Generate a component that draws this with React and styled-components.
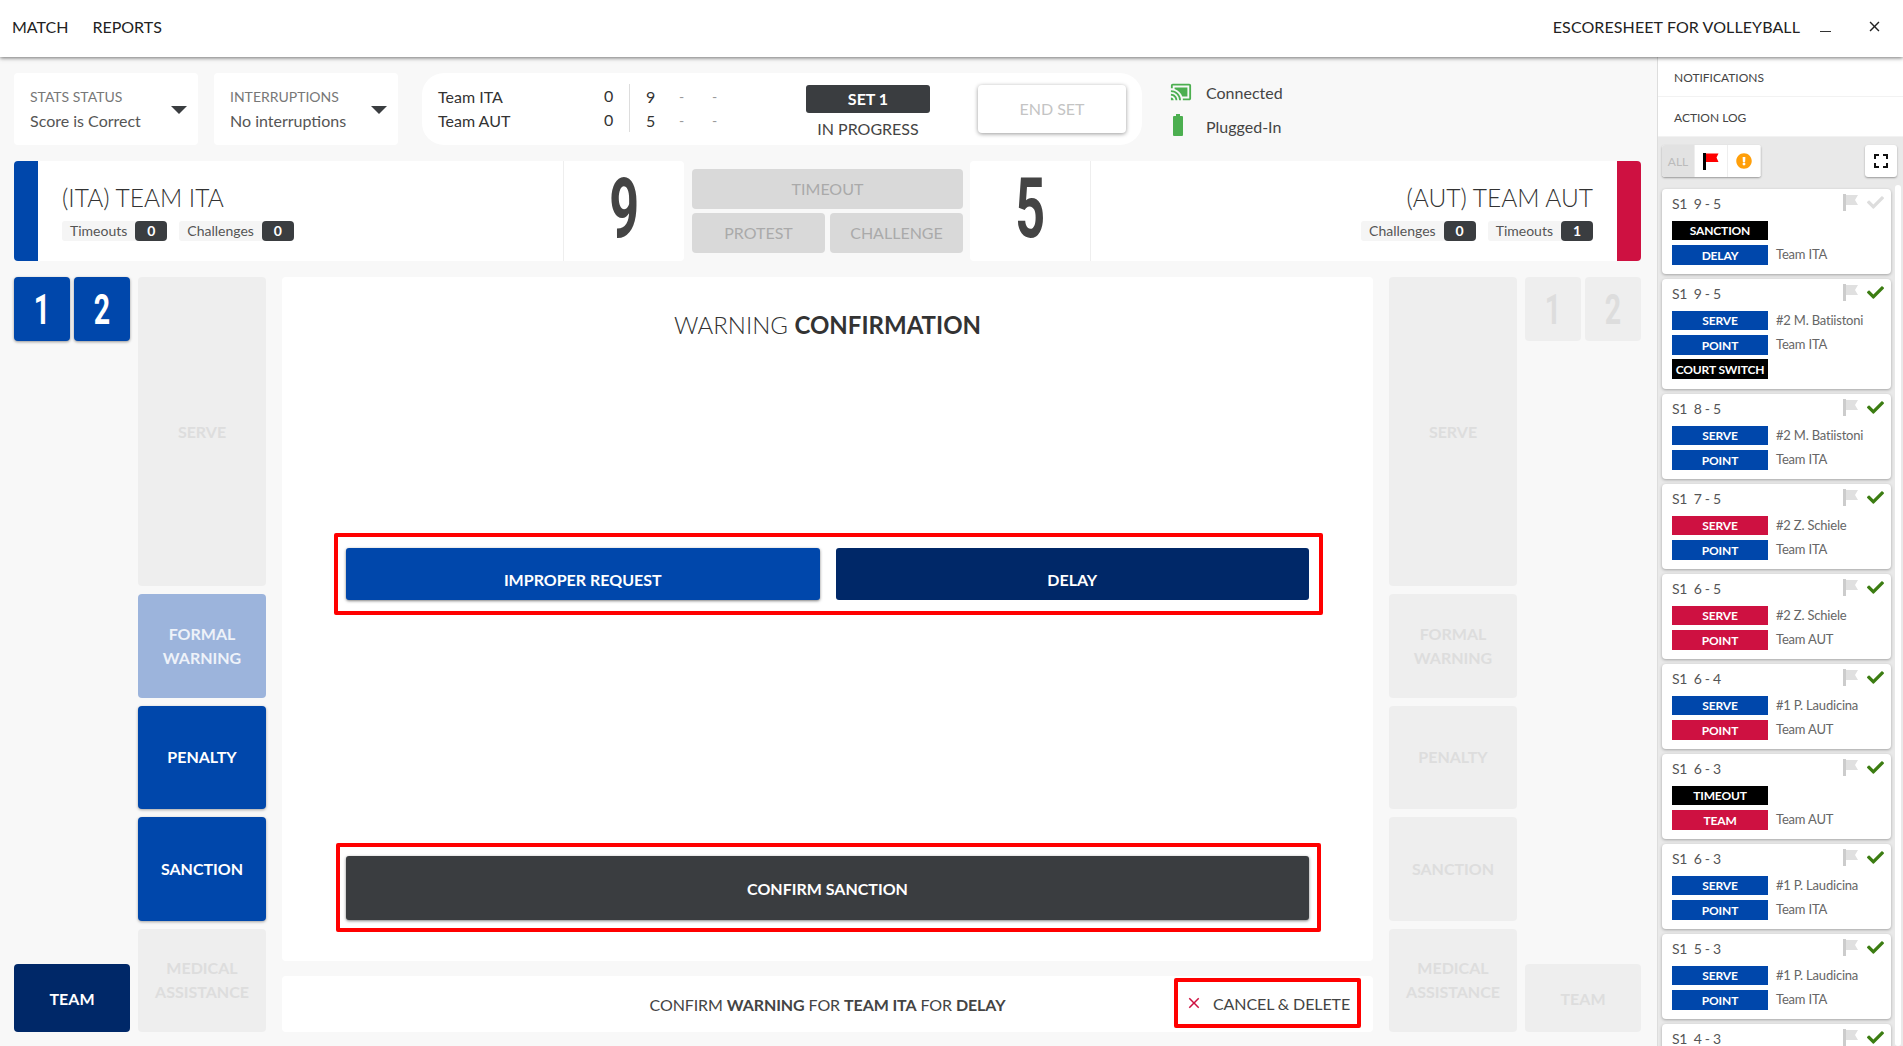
import React from 'react';
import styled, { createGlobalStyle } from 'styled-components';
import { FaCheck, FaExclamationCircle } from 'react-icons/fa';
import { MdCastConnected, MdFullscreen, MdClose } from 'react-icons/md';

const BLUE = '#0047ab';
const NAVY = '#002868';
const DARK = '#3a3d40';
const RED = '#ce1141';

const Global = createGlobalStyle`
  html, body { margin: 0; padding: 0; height: 100%; overflow: hidden; background: #f8f8f8; }
  * { box-sizing: border-box; }
  body { font-family: Lato, "Open Sans", sans-serif; color: #3a3d40; }
`;

const Page = styled.div`width: 1903px; height: 1046px; display: flex; flex-direction: column; overflow: hidden;`;
const Header = styled.header`
  height: 57px; flex: none; background: #fff; display: flex; align-items: center;
  padding: 0 20px 4px 12px; box-shadow: 0 1px 4px rgba(0,0,0,.55); position: relative; z-index: 3;
  font-size: 16px; color: #222;
`;
const Nav = styled.span`margin-right: 24px;`;
const HeaderTitle = styled.span`margin-left: auto; margin-right: 20px; letter-spacing: .1px;`;
const Minimise = styled.span`width: 11px; height: 1px; background: #333; margin: 10px 35px 0 0;`;
const Body = styled.div`flex: 1; display: flex; min-height: 0;`;
const Main = styled.main`width: 1657px; flex: none; padding: 16px 16px 0 14px; display: flex; flex-direction: column;`;

const TopRow = styled.div`display: flex; height: 72px; flex: none;`;
const Drop = styled.div`
  width: 184px; background: #fff; border-radius: 4px; margin-right: 16px; padding: 14px 16px;
  position: relative;
`;
const DropLabel = styled.div`font-size: 14px; color: #777; line-height: 20px;`;
const DropValue = styled.div`font-size: 16px; color: #555; line-height: 24px; margin-top: 2px;`;
const Caret = styled.span`
  position: absolute; right: 11px; top: 33px; width: 0; height: 0;
  border-left: 8px solid transparent; border-right: 8px solid transparent; border-top: 8px solid #3a3d40;
`;
const ScoreCard = styled.div`
  width: 720px; margin-left: 8px; background: #fff; border-radius: 22px; display: flex; align-items: center;
  padding: 0 16px;
`;
const ScoreGrid = styled.div`
  width: 300px; margin-top: -2px; display: grid; grid-template-columns: 172px 36px 33px 33px 20px; grid-auto-rows: 24px;
  font-size: 16px; color: #333; align-items: center;
`;
const ScoreNum = styled.span`position: relative;`;
const Dash = styled.span`color: #999; font-size: 14px;`;
const Zero = styled.span`
  margin-left: -6px; height: 24px; line-height: 24px; border-right: 1px solid #ddd;
  width: 26px;
`;
const SetBox = styled.div`width: 124px; margin: 4px 0 0 68px; display: flex; flex-direction: column; align-items: center;`;
const SetPill = styled.div`
  width: 124px; height: 28px; background: ${DARK}; color: #fff; border-radius: 3px; font-weight: 700;
  font-size: 16px; display: flex; align-items: center; justify-content: center;
`;
const SetState = styled.div`font-size: 16px; color: #444; margin-top: 7px; line-height: 18px;`;
const EndSet = styled.div`
  width: 148px; height: 48px; margin-left: 48px; background: #fff; border-radius: 4px; color: #c4c4c4; font-size: 16px;
  box-shadow: 0 1px 4px rgba(0,0,0,.4); display: flex; align-items: center; justify-content: center; padding-bottom: 1px;
`;
const Status = styled.div`margin-left: 28px; padding-top: 2px; display: grid; grid-template-columns: 36px auto; grid-auto-rows: 34px; align-items: center; font-size: 16px; color: #444;`;
const Battery = styled.span`
  display: block; width: 10px; height: 20px; background: #4caf50; border-radius: 1px; position: relative; margin-left: 3px;
  &::before { content: ''; position: absolute; top: -2px; left: 3px; width: 4px; height: 2px; background: #4caf50; }
`;

const TeamRow = styled.div`display: flex; height: 100px; margin-top: 16px; flex: none;`;
const TeamCard = styled.div`
  width: ${p => p.$right ? 671 : 670}px; flex: none; background: #fff; border-radius: 4px; display: flex; overflow: hidden;
  flex-direction: ${p => p.$right ? 'row-reverse' : 'row'};
`;
const TeamBar = styled.div`width: 24px; flex: none; background: ${p => p.$c};`;
const TeamInfo = styled.div`
  flex: 1; padding: ${p => p.$right ? '0 24px 0 0' : '0 0 0 24px'};
  display: flex; flex-direction: column; align-items: ${p => p.$right ? 'flex-end' : 'flex-start'};
`;
const TeamName = styled.div`font-size: 24.500px; font-weight: 300; line-height: 32px; margin-top: 21px; color: #333;`;
const Badges = styled.div`display: flex; gap: 12px; margin-top: 7px;`;
const Badge = styled.div`display: flex; height: 20px; background: #f5f5f5; border-radius: 3px; font-size: 14px; color: #555; line-height: 20px; padding-left: 8px;`;
const BadgeNum = styled.span`
  width: 32px; margin-left: 8px; background: ${DARK}; color: #fff; border-radius: 4px; font-weight: 700; text-align: center; font-size: 14px;
`;
const ScoreBox = styled.div`
  width: 121px; flex: none; display: flex; align-items: center; justify-content: center;
  ${p => p.$right ? 'border-right' : 'border-left'}: 1px solid #eee;
`;
const BigDigit = styled.span`
  display: inline-block; font-family: Roboto, sans-serif; font-weight: 700; font-size: 84px; line-height: 1; color: #444;
  transform: translateY(-2px) scale(.62, 1);
`;
const Actions = styled.div`
  width: 271px; margin: 8px 7px 8px 8px; flex: none; display: grid; grid-template-columns: 133px 133px; gap: 4px 5px; grid-template-rows: 40px 40px;
`;
const Disabled = styled.div`
  grid-column: ${p => p.$wide ? '1 / 3' : 'auto'};
  background: #d9d9d9; color: #aaa; border-radius: 4px; font-size: 16px; padding-bottom: 1px;
  display: flex; align-items: center; justify-content: center;
`;

const Play = styled.div`flex: 1; margin-top: 16px; display: flex; min-height: 0; padding-bottom: 14px;`;
const SideLeft = styled.div`width: 116px; flex: none; display: flex; flex-direction: column; margin-right: 8px;`;
const SetPair = styled.div`display: flex; gap: 4px;`;
const SetBtn = styled.div`
  width: 56px; height: 64px; border-radius: 4px; display: flex; align-items: center; justify-content: center; overflow: hidden;
  background: ${p => p.$on ? BLUE : '#eee'};
  color: ${p => p.$on ? '#fff' : '#ddd'};
  box-shadow: ${p => p.$on ? '0 1px 3px rgba(0,0,0,.4)' : 'none'};
`;
const SetDigit = styled.span`
  display: inline-block; font-family: Roboto, sans-serif; font-weight: 700; font-size: 42px; transform: scale(.68, 1);
`;
const TeamBtn = styled.div`
  height: 68px; margin-top: auto; border-radius: 4px; background: ${p => p.$on ? NAVY : '#eee'}; color: ${p => p.$on ? '#fff' : '#ddd'};
  font-weight: 700; font-size: 16px; display: flex; align-items: center; justify-content: center;
`;
const ActionCol = styled.div`width: 128px; flex: none; display: flex; flex-direction: column; gap: 8px;`;
const ActionBtn = styled.div`
  flex: ${p => p.$big ? '0 0 309px' : '0 0 103.500px'};
  border-radius: 4px; display: flex; align-items: center; justify-content: center; text-align: center; padding: 0 8px;
  font-weight: 700; font-size: 16px; line-height: 24px;
  background: ${p => p.$k === 'on' ? BLUE : p.$k === 'faded' ? '#9cb4dc' : '#eee'};
  color: ${p => p.$k === 'on' ? '#fff' : p.$k === 'faded' ? '#eef2f9' : '#ddd'};
  box-shadow: ${p => p.$k === 'on' ? '0 1px 3px rgba(0,0,0,.35)' : 'none'};
`;
const Center = styled.div`width: 1091px; margin: 0 16px; flex: none; display: flex; flex-direction: column;`;
const ConfirmCard = styled.div`
  height: 684px; background: #fff; border-radius: 4px; display: flex; flex-direction: column; align-items: center;
`;
const ConfirmTitle = styled.div`font-size: 24px; font-weight: 300; color: #333; line-height: 30px; margin-top: 33px;`;
const Strong = styled.b`font-weight: 700;`;
const Outline = styled.div`border: 4px solid #f00; border-radius: 2px;`;
const ChoiceBox = styled(Outline)`
  width: 989px; height: 82px; margin: 193px 0 0 2px; padding: 11px 10px 0 8px; display: flex; gap: 16px; align-items: flex-start;
`;
const Choice = styled.div`
  flex: 1; height: 52px; border-radius: 3px; background: ${p => p.$c}; color: #fff; font-weight: 700; font-size: 16px;
  display: flex; align-items: flex-end; justify-content: center; padding-bottom: 10px; line-height: 20px;
  box-shadow: ${p => p.$shadow ? '0 1px 3px rgba(0,0,0,.5)' : 'none'};
`;
const SubmitBox = styled(Outline)`width: 985px; height: 89px; margin: 228px 0 0 2px; padding: 9px 8px 0 6px;`;
const Submit = styled.div`
  height: 64px; border-radius: 3px; background: ${DARK}; color: #fff; font-weight: 700; font-size: 16px;
  display: flex; align-items: center; justify-content: center; box-shadow: 0 1px 3px rgba(0,0,0,.5);
`;
const Footer = styled.div`
  height: 56px; margin-top: 15px; background: #fff; border-radius: 4px; display: flex; align-items: center; position: relative;
  font-size: 16px; color: #444;
`;
const FooterText = styled.div`width: 100%; text-align: center; letter-spacing: -.1px;`;
const Cancel = styled(Outline)`
  position: absolute; right: 12px; top: 2px; width: 187px; height: 50px; display: flex; align-items: center; padding-left: 7px; gap: 10px;
  color: #444; font-size: 16px; white-space: nowrap; letter-spacing: -.1px;
`;
const SideRight = styled.div`width: 116px; flex: none; display: flex; flex-direction: column; margin-left: 8px;`;

const Aside = styled.aside`
  width: 246px; flex: none; background: #e9e9e9; border-left: 1px solid #ddd; display: flex; flex-direction: column; min-height: 0; overflow: hidden;
`;
const AsideTab = styled.div`
  height: 40px; flex: none; background: #fff; font-size: 12px; color: #444; display: flex; align-items: center; padding: 2px 0 0 16px;
  border-bottom: 1px solid #f2f2f2;
`;
const FilterRow = styled.div`display: flex; justify-content: space-between; padding: 8px 6px 0 4px; flex: none;`;
const FilterGroup = styled.div`display: flex; height: 32px; background: #fff; border-radius: 3px; box-shadow: 0 1px 2px rgba(0,0,0,.35); overflow: hidden;`;
const FilterCell = styled.div`
  width: 33px; display: flex; align-items: center; justify-content: center; font-size: 12px;
  background: ${p => p.$on ? '#e2e2e2' : '#fff'}; color: #bbb; border-right: 1px solid #eee;
`;
const FullBtn = styled.div`
  width: 32px; height: 32px; background: #fff; border-radius: 3px; box-shadow: 0 1px 2px rgba(0,0,0,.35);
  display: flex; align-items: center; justify-content: center; color: #111;
`;
const LogArea = styled.div`flex: 1; position: relative; padding: 12px 0 0 4px; min-height: 0; overflow: hidden;`;
const Scroll = styled.div`position: absolute; right: 2px; top: 8px; bottom: 0; width: 6px; background: #fff; border-radius: 3px;`;
const LogCard = styled.div`
  width: 229px; background: #fff; border-radius: 4px; padding: 0 10px; margin-bottom: 5px; position: relative;
  height: ${p => p.$tall ? 110 : 85}px; box-shadow: 0 1px 3px rgba(0,0,0,.3); flex: none;
`;
const LogHead = styled.div`height: 32px; padding-top: 5px; font-size: 14px; line-height: 20px; color: #555; white-space: pre; letter-spacing: -.3px;`;
const LogMarks = styled.div`position: absolute; right: 7px; top: 5px; display: flex; align-items: flex-start; gap: 8px;`;
const LogLine = styled.div`display: flex; align-items: center; margin-bottom: ${p => p.$first ? 5 : 4}px; font-size: 13px; color: #666; letter-spacing: -.2px;`;
const Tag = styled.span`
  width: 96px; height: ${p => p.$first ? 19 : 20}px; flex: none; margin-right: 8px; background: ${p => p.$c}; color: #fff; font-weight: 700; font-size: 12px;
  display: flex; align-items: center; justify-content: center; white-space: nowrap; letter-spacing: -.15px;
`;
const Player = styled.span`padding-bottom: 2px;`;

const FlagOutline = () => (
  <svg width="16" height="17" viewBox="0 0 16 17"><rect x="0" y="0" width="3" height="17" fill="#ccc" /><path d="M3 1h12l-3 5 3 5H3z" fill="#e0e0e0" /></svg>
);
const RedFlag = () => (
  <svg width="16" height="17" viewBox="0 0 16 17"><rect x="0" y="0" width="3" height="17" fill="#000" /><path d="M3 0.500h12.500l-2 4 2 4.500H3z" fill="#f00" /></svg>
);

const S = { B: BLUE, R: RED, K: '#000' };
const cards = [
  ['9 - 5', false, [['SANCTION', 'K', ''], ['DELAY', 'B', 'Team ITA']], true],
  ['9 - 5', true, [['SERVE', 'B', '#2 M. Batiistoni'], ['POINT', 'B', 'Team ITA'], ['COURT SWITCH', 'K', '']]],
  ['8 - 5', false, [['SERVE', 'B', '#2 M. Batiistoni'], ['POINT', 'B', 'Team ITA']]],
  ['7 - 5', false, [['SERVE', 'R', '#2 Z. Schiele'], ['POINT', 'B', 'Team ITA']]],
  ['6 - 5', false, [['SERVE', 'R', '#2 Z. Schiele'], ['POINT', 'R', 'Team AUT']]],
  ['6 - 4', false, [['SERVE', 'B', '#1 P. Laudicina'], ['POINT', 'R', 'Team AUT']]],
  ['6 - 3', false, [['TIMEOUT', 'K', ''], ['TEAM', 'R', 'Team AUT']]],
  ['6 - 3', false, [['SERVE', 'B', '#1 P. Laudicina'], ['POINT', 'B', 'Team ITA']]],
  ['5 - 3', false, [['SERVE', 'B', '#1 P. Laudicina'], ['POINT', 'B', 'Team ITA']]],
  ['4 - 3', false, []],
];

const Dropdown = ({ label, value }) => (
  <Drop><DropLabel>{label}</DropLabel><DropValue>{value}</DropValue><Caret /></Drop>
);

const ActionColumn = ({ on }) => (
  <ActionCol>
    <ActionBtn $big $k="off">SERVE</ActionBtn>
    <ActionBtn $k={on ? 'faded' : 'off'}>FORMAL<br />WARNING</ActionBtn>
    <ActionBtn $k={on ? 'on' : 'off'}>PENALTY</ActionBtn>
    <ActionBtn $k={on ? 'on' : 'off'}>SANCTION</ActionBtn>
    <ActionBtn $k="off">MEDICAL<br />ASSISTANCE</ActionBtn>
  </ActionCol>
);

const Sets = ({ on }) => (
  <SetPair>
    <SetBtn $on={on}><SetDigit>1</SetDigit></SetBtn>
    <SetBtn $on={on}><SetDigit>2</SetDigit></SetBtn>
  </SetPair>
);

export default function App() {
  return (
    <Page>
      <Global />
      <Header>
        <Nav>MATCH</Nav><Nav>REPORTS</Nav>
        <HeaderTitle>ESCORESHEET FOR VOLLEYBALL</HeaderTitle>
        <Minimise />
        <MdClose size={17} color="#222" />
      </Header>
      <Body>
        <Main>
          <TopRow>
            <Dropdown label="STATS STATUS" value="Score is Correct" />
            <Dropdown label="INTERRUPTIONS" value="No interruptions" />
            <ScoreCard>
              <ScoreGrid>
                <span>Team ITA</span><Zero>0</Zero><ScoreNum>9</ScoreNum><Dash>-</Dash><Dash>-</Dash>
                <span>Team AUT</span><Zero>0</Zero><ScoreNum>5</ScoreNum><Dash>-</Dash><Dash>-</Dash>
              </ScoreGrid>
              <SetBox><SetPill>SET 1</SetPill><SetState>IN PROGRESS</SetState></SetBox>
              <EndSet>END SET</EndSet>
            </ScoreCard>
            <Status>
              <MdCastConnected size={22} color="#4caf50" /><span>Connected</span>
              <Battery /><span>Plugged-In</span>
            </Status>
          </TopRow>
          <TeamRow>
            <TeamCard>
              <TeamBar $c={BLUE} />
              <TeamInfo>
                <TeamName>(ITA) TEAM ITA</TeamName>
                <Badges>
                  <Badge>Timeouts<BadgeNum>0</BadgeNum></Badge>
                  <Badge>Challenges<BadgeNum>0</BadgeNum></Badge>
                </Badges>
              </TeamInfo>
              <ScoreBox><BigDigit>9</BigDigit></ScoreBox>
            </TeamCard>
            <Actions>
              <Disabled $wide>TIMEOUT</Disabled>
              <Disabled>PROTEST</Disabled>
              <Disabled>CHALLENGE</Disabled>
            </Actions>
            <TeamCard $right>
              <TeamBar $c={RED} />
              <TeamInfo $right>
                <TeamName>(AUT) TEAM AUT</TeamName>
                <Badges>
                  <Badge>Challenges<BadgeNum>0</BadgeNum></Badge>
                  <Badge>Timeouts<BadgeNum>1</BadgeNum></Badge>
                </Badges>
              </TeamInfo>
              <ScoreBox $right><BigDigit>5</BigDigit></ScoreBox>
            </TeamCard>
          </TeamRow>
          <Play>
            <SideLeft><Sets on /><TeamBtn $on>TEAM</TeamBtn></SideLeft>
            <ActionColumn on />
            <Center>
              <ConfirmCard>
                <ConfirmTitle>WARNING <Strong>CONFIRMATION</Strong></ConfirmTitle>
                <ChoiceBox>
                  <Choice $c={BLUE} $shadow>IMPROPER REQUEST</Choice>
                  <Choice $c={NAVY}>DELAY</Choice>
                </ChoiceBox>
                <SubmitBox><Submit>CONFIRM SANCTION</Submit></SubmitBox>
              </ConfirmCard>
              <Footer>
                <FooterText>CONFIRM <Strong>WARNING</Strong> FOR <Strong>TEAM ITA</Strong> FOR <Strong>DELAY</Strong></FooterText>
                <Cancel><MdClose size={18} color={RED} />CANCEL &amp; DELETE</Cancel>
              </Footer>
            </Center>
            <ActionColumn />
            <SideRight><Sets /><TeamBtn>TEAM</TeamBtn></SideRight>
          </Play>
        </Main>
        <Aside>
          <AsideTab>NOTIFICATIONS</AsideTab>
          <AsideTab>ACTION LOG</AsideTab>
          <FilterRow>
            <FilterGroup>
              <FilterCell $on>ALL</FilterCell>
              <FilterCell><RedFlag /></FilterCell>
              <FilterCell><FaExclamationCircle size={16} color="#ff9f0a" /></FilterCell>
            </FilterGroup>
            <FullBtn><MdFullscreen size={24} /></FullBtn>
          </FilterRow>
          <LogArea>
            <Scroll />
            {cards.map(([score, tall, lines, pending], i) => (
              <LogCard key={i} $tall={tall}>
                <LogHead>{`S1  ${score}`}</LogHead>
                <LogMarks><FlagOutline /><FaCheck size={17} color={pending ? '#ddd' : '#3c7d12'} /></LogMarks>
                {lines.map(([t, c, n], j) => (
                  <LogLine key={t} $first={j === 0}><Tag $first={j === 0} $c={S[c]}>{t}</Tag><Player>{n}</Player></LogLine>
                ))}
              </LogCard>
            ))}
          </LogArea>
        </Aside>
      </Body>
    </Page>
  );
}
